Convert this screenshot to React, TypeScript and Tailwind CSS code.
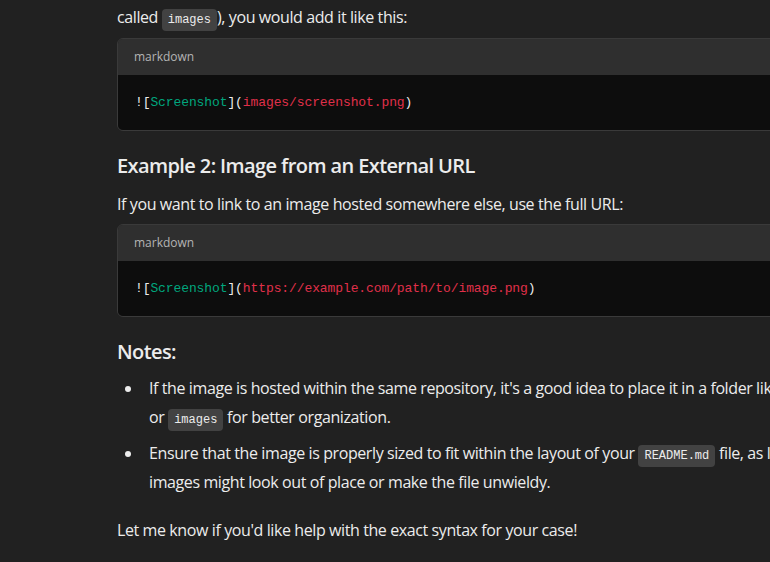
import React from "react";

const sans = "font-['Segoe_UI','Open_Sans',sans-serif]";
const mono = "font-['Liberation_Mono',monospace]";

function InlineCode({ children }: { children: React.ReactNode }) {
  return (
    <code className={`${mono} text-[12px] leading-[1] tracking-normal bg-[#424242] text-[#ececec] rounded-[4px] px-[6px] py-[4px]`}>
      {children}
    </code>
  );
}

function CodeBlock({ children }: { children: React.ReactNode }) {
  return (
    <div className="w-[720px] rounded-[6px] border border-[#3a3a3a] overflow-hidden">
      <div className="h-[36px] bg-[#2f2f2f] flex items-center px-[16px] text-[12px] tracking-normal text-[#b4b4b4]">
        markdown
      </div>
      <div className={`h-[55px] bg-[#0d0d0d] flex items-center px-[17px] ${mono} text-[13px] tracking-[-0.1px] text-[#ececec] whitespace-nowrap`}>
        {children}
      </div>
    </div>
  );
}

function Bullet() {
  return (
    <span className="w-[32px] shrink-0 flex justify-start pl-[8px] pt-[12px]">
      <span className="w-[6px] h-[6px] rounded-full bg-[#ececec]" />
    </span>
  );
}

export default function App() {
  return (
    <div className={`w-[770px] h-[562px] overflow-hidden bg-[#212121] text-[#ececec] tracking-[-0.4px] ${sans}`}>
      <div className="pl-[117px] pt-[3px] w-[900px]">
        <p className="text-[16px] leading-[28px]">
          called <InlineCode>images</InlineCode>), you would add it like this:
        </p>
        <div className="mt-[7px]">
          <CodeBlock>
            <span>![</span>
            <span className="text-[#00a67d]">Screenshot</span>
            <span>](</span>
            <span className="text-[#e0304a]">images/screenshot.png</span>
            <span>)</span>
          </CodeBlock>
        </div>
        <h3 className="mt-[21px] text-[20px] leading-[28px] font-semibold tracking-[-0.6px]">
          Example 2: Image from an External URL
        </h3>
        <p className="mt-[10px] text-[16px] leading-[28px]">
          If you want to link to an image hosted somewhere else, use the full URL:
        </p>
        <div className="mt-[6px]">
          <CodeBlock>
            <span>![</span>
            <span className="text-[#00a67d]">Screenshot</span>
            <span>](</span>
            <span className="text-[#e0304a]">https://example.com/path/to/image.png</span>
            <span>)</span>
          </CodeBlock>
        </div>
        <h3 className="mt-[21px] text-[20px] leading-[28px] font-semibold tracking-[-0.6px]">Notes:</h3>
        <ul className="mt-[8px] text-[16px] leading-[29px]">
          <li className="flex">
            <Bullet />
            <div className="whitespace-nowrap">
              If the image is hosted within the same repository, it's a good idea to place it in a folder like <InlineCode>assets</InlineCode>
              <br />
              or <InlineCode>images</InlineCode> for better organization.
            </div>
          </li>
          <li className="flex mt-[7px]">
            <Bullet />
            <div className="whitespace-nowrap">
              Ensure that the image is properly sized to fit within the layout of your <InlineCode>README.md</InlineCode> file, as large
              <br />
              images might look out of place or make the file unwieldy.
            </div>
          </li>
        </ul>
        <p className="mt-[19px] text-[16px] leading-[28px]">
          Let me know if you'd like help with the exact syntax for your case!
        </p>
      </div>
    </div>
  );
}
